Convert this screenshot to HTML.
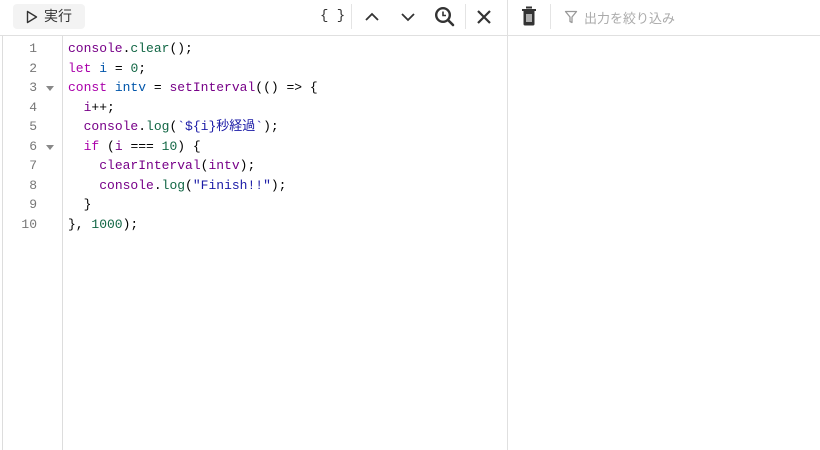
<!DOCTYPE html>
<html><head><meta charset="utf-8"><style>
*{margin:0;padding:0;box-sizing:border-box}
body{width:820px;height:450px;background:#fff;position:relative;overflow:hidden;font-family:"Liberation Sans","Noto Sans CJK JP",sans-serif}
.tb{position:absolute;left:0;top:0;width:820px;height:36px;border-bottom:1px solid #e0e0e0}
.run{position:absolute;left:13px;top:4px;width:72px;height:25px;background:#f3f3f3;border-radius:4px;font-size:14px;color:#333;line-height:25px;padding-left:31px}
.run svg{position:absolute;left:13px;top:6px}
.sep{position:absolute;top:4px;width:1px;height:25px;background:#e4e4e4}
.vd{position:absolute;left:507px;top:0;width:1px;height:450px;background:#e0e0e0}
.lb{position:absolute;left:2px;top:36px;width:1px;height:414px;background:#ddd}
.gb{position:absolute;left:62px;top:36px;width:1px;height:414px;background:#ddd}
.ic{position:absolute}
.code{position:absolute;left:0;top:39px;font-family:"Liberation Mono","Noto Sans CJK JP",monospace;font-size:13px;line-height:19.55px}
.ln{position:absolute;left:0;width:37px;text-align:right;color:#777}
.l{position:absolute;left:68px;white-space:pre;color:#000}
.fold{position:absolute;left:46px;width:0;height:0;border-left:4px solid transparent;border-right:4px solid transparent;border-top:5px solid #888}
.k{color:#a0a}.p{color:#708}.f{color:#164}.v{color:#05a}.n{color:#164}.s{color:#1a1aa6}.o{color:#444}
.filter{position:absolute;left:584px;top:8px;font-size:13px;color:#aaa}
</style></head><body>
<div class="tb">
<div class="run"><svg width="12" height="14" viewBox="0 0 12 14"><path d="M1.5 1.5 L10.5 7 L1.5 12.5 Z" fill="none" stroke="#333" stroke-width="1.4" stroke-linejoin="round"/></svg>実行</div>
<div class="ic" style="left:320px;top:8px;font-family:'Liberation Mono',monospace;font-size:14px;color:#333">{ }</div>
<div class="sep" style="left:351px"></div>
<svg class="ic" style="left:364px;top:10px" width="16" height="14"><path d="M2 10 L8 4 L14 10" fill="none" stroke="#333" stroke-width="1.8"/></svg>
<svg class="ic" style="left:400px;top:10px" width="16" height="14"><path d="M2 4 L8 10 L14 4" fill="none" stroke="#333" stroke-width="1.8"/></svg>
<svg class="ic" style="left:434px;top:6px" width="22" height="22"><circle cx="9" cy="9" r="6.8" fill="none" stroke="#333" stroke-width="2.4"/><path d="M9 5.5 V9.5 H12" fill="none" stroke="#333" stroke-width="1.6"/><path d="M14 14 L19 19" stroke="#333" stroke-width="2.6" stroke-linecap="round"/></svg>
<div class="sep" style="left:465px"></div>
<svg class="ic" style="left:476px;top:9px" width="16" height="16"><path d="M2 2 L14 14 M14 2 L2 14" stroke="#333" stroke-width="2.2"/></svg>
<div class="sep" style="left:507px;top:0;height:36px;background:#e0e0e0"></div>
<svg class="ic" style="left:520px;top:5px" width="18" height="22"><path d="M6 2.5 H12 M2 5 H16" stroke="#333" stroke-width="2"/><path d="M3.5 6 H14.5 V19 Q14.5 20.5 13 20.5 H5 Q3.5 20.5 3.5 19 Z" fill="#333"/><path d="M7 9 V17 M9 9 V17 M11 9 V17" stroke="#fff" stroke-width="1.2"/></svg>
<div class="sep" style="left:550px"></div>
<svg class="ic" style="left:564px;top:10px" width="14" height="14"><path d="M1.5 1.5 H12.5 L8 7 V12.5 L6 11.5 V7 Z" fill="none" stroke="#999" stroke-width="1.3" stroke-linejoin="round"/></svg>
<div class="filter">出力を絞り込み</div>
</div>
<div class="vd"></div><div class="lb"></div><div class="gb"></div>
<div class="code">
<div class="ln" style="top:0">1</div><div class="ln" style="top:19.55px">2</div><div class="ln" style="top:39.1px">3</div><div class="ln" style="top:58.65px">4</div><div class="ln" style="top:78.2px">5</div><div class="ln" style="top:97.75px">6</div><div class="ln" style="top:117.3px">7</div><div class="ln" style="top:136.85px">8</div><div class="ln" style="top:156.4px">9</div><div class="ln" style="top:175.95px">10</div>
<div class="fold" style="top:47px"></div><div class="fold" style="top:106px"></div>
<div class="l" style="top:0"><span class="p">console</span>.<span class="f">clear</span>();</div>
<div class="l" style="top:19.55px"><span class="k">let</span> <span class="v">i</span> = <span class="n">0</span>;</div>
<div class="l" style="top:39.1px"><span class="k">const</span> <span class="v">intv</span> = <span class="p">setInterval</span>(() =&gt; {</div>
<div class="l" style="top:58.65px">  <span class="p">i</span>++;</div>
<div class="l" style="top:78.2px">  <span class="p">console</span>.<span class="f">log</span>(<span class="s">`${i}秒経過`</span>);</div>
<div class="l" style="top:97.75px">  <span class="k">if</span> (<span class="p">i</span> === <span class="n">10</span>) {</div>
<div class="l" style="top:117.3px">    <span class="p">clearInterval</span>(<span class="p">intv</span>);</div>
<div class="l" style="top:136.85px">    <span class="p">console</span>.<span class="f">log</span>(<span class="s">"Finish!!"</span>);</div>
<div class="l" style="top:156.4px">  }</div>
<div class="l" style="top:175.95px">}, <span class="n">1000</span>);</div>
</div>
</body></html>
